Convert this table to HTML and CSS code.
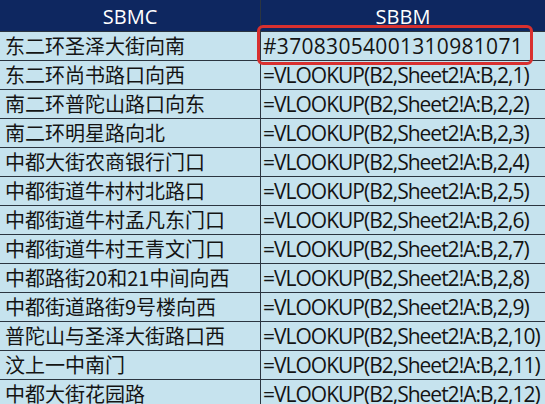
FILE: index.html
```html
<!DOCTYPE html>
<html>
<head>
<meta charset="utf-8">
<link rel="stylesheet" href="styles.css">
</head>
<body>
<div class="sheet">
  <div class="hd">SBMC</div><div class="hd">SBBM</div>
  <div class="c zh">东二环圣泽大街向南</div><div class="c en hl">#37083054001310981071</div>
  <div class="c zh">东二环尚书路口向西</div><div class="c en">=VLOOKUP(B2,Sheet2!A:B,2,1)</div>
  <div class="c zh">南二环普陀山路口向东</div><div class="c en">=VLOOKUP(B2,Sheet2!A:B,2,2)</div>
  <div class="c zh">南二环明星路向北</div><div class="c en">=VLOOKUP(B2,Sheet2!A:B,2,3)</div>
  <div class="c zh">中都大街农商银行门口</div><div class="c en">=VLOOKUP(B2,Sheet2!A:B,2,4)</div>
  <div class="c zh">中都街道牛村村北路口</div><div class="c en">=VLOOKUP(B2,Sheet2!A:B,2,5)</div>
  <div class="c zh">中都街道牛村孟凡东门口</div><div class="c en">=VLOOKUP(B2,Sheet2!A:B,2,6)</div>
  <div class="c zh">中都街道牛村王青文门口</div><div class="c en">=VLOOKUP(B2,Sheet2!A:B,2,7)</div>
  <div class="c zh">中都路街20和21中间向西</div><div class="c en">=VLOOKUP(B2,Sheet2!A:B,2,8)</div>
  <div class="c zh">中都街道路街9号楼向西</div><div class="c en">=VLOOKUP(B2,Sheet2!A:B,2,9)</div>
  <div class="c zh">普陀山与圣泽大街路口西</div><div class="c en">=VLOOKUP(B2,Sheet2!A:B,2,10)</div>
  <div class="c zh">汶上一中南门</div><div class="c en">=VLOOKUP(B2,Sheet2!A:B,2,11)</div>
  <div class="c zh">中都大街花园路</div><div class="c en">=VLOOKUP(B2,Sheet2!A:B,2,12)</div>
</div>
</body>
</html>
```
FILE: styles.css
```css
html, body { margin: 0; padding: 0; background: #c6e3ee; overflow: hidden; height: 404px; }
.sheet {
  display: grid;
  grid-template-columns: 260px 284px;
  grid-template-rows: 31px repeat(13, 28px);
  width: 545px;
  background: #2b3540;
  gap: 1px 1px;
}
.hd {
  background: #0e2760;
  color: #ffffff;
  font-family: "Open Sans", "Liberation Sans", sans-serif;
  font-size: 20px;
  display: flex;
  align-items: center;
  justify-content: center;
  line-height: 1;
  padding-top: 2px;
}
.c {
  background: #c6e3ee;
  color: #141414;
  display: flex;
  align-items: center;
  white-space: nowrap;
  line-height: 1;
}
.zh {
  font-family: "Noto Sans CJK SC", sans-serif;
  font-size: 20px;
  padding-left: 5px;
}
.en {
  font-family: "Open Sans", "Liberation Sans", sans-serif;
  font-size: 21px;
  padding-left: 2px;
  letter-spacing: -1px;
}
.hl { position: relative; letter-spacing: 0.3px; }
.hl::after {
  content: "";
  position: absolute;
  left: -4px;
  top: -7px;
  width: 270px;
  height: 34px;
  border: 3px solid #d8302f;
  border-radius: 6px;
}
```
